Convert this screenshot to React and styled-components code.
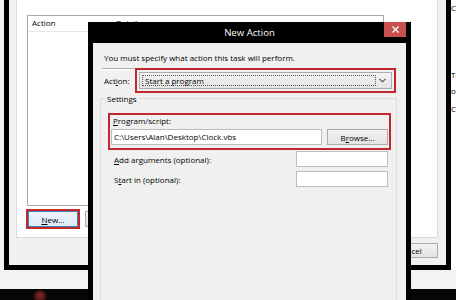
import React from "react";
import styled, { createGlobalStyle } from "styled-components";

const GlobalStyle = createGlobalStyle`
  html, body {
    margin: 0;
    padding: 0;
    background: #f0f0f0;
  }
  * {
    box-sizing: border-box;
  }
`;

const Desktop = styled.div`
  width: 456px;
  height: 300px;
  overflow: hidden;
  display: flex;
  flex-direction: column;
  background: #f3f3f3;
  font-family: "Open Sans", "Liberation Sans", sans-serif;
  font-size: 8px;
  color: #000;
`;

const Workspace = styled.div`
  position: relative;
  flex: 1;
`;

const Taskbar = styled.div`
  height: 11px;
  background: #060606;
  display: flex;
  padding-left: 33px;
`;

const Orb = styled.span`
  width: 14px;
  height: 14px;
  margin-top: 1px;
  border-radius: 50%;
  background: radial-gradient(circle at 50% 40%, #8a2a2a 0%, #4a1414 45%, transparent 75%);
`;

/* window to the right, only a sliver is visible */
const SideWindow = styled.div`
  position: absolute;
  left: 450px;
  top: 0;
  width: 6px;
  height: 270px;
  background: #fff;
  overflow: hidden;
  padding-left: 1px;
  white-space: nowrap;
`;

const SideLine = styled.div`
  line-height: 10px;
  margin-top: ${p => p.$gap}px;
`;

/* Create Task window behind the dialog */
const TaskWindow = styled.div`
  position: absolute;
  left: 4px;
  top: -20px;
  width: 447px;
  height: 290px;
  border: 5px solid #000;
  background: #f0f0f0;
  display: flex;
  flex-direction: column;
  padding: 5px 8px 0 7px;
`;

const TabPage = styled.div`
  flex: 1;
  background: #fff;
  border: 1px solid #d9d9d9;
  padding: 24px 0 0 10px;
`;

const ActionList = styled.div`
  width: 357px;
  height: 191px;
  border: 1px solid #a9a9a9;
  background: #fff;
`;

const ListHeader = styled.div`
  display: flex;
  height: 16px;
  align-items: center;
  padding-bottom: 2px;
  border-bottom: 1px solid #e8e8e8;
`;

const HeaderCell = styled.div`
  width: ${p => p.$w}px;
  padding-left: 4px;
`;

const ListButtons = styled.div`
  display: flex;
  gap: 7px;
  margin: 5px 0 0 1px;
`;

const Button = styled.div`
  width: ${p => p.$w || 50}px;
  height: ${p => p.$h || 16}px;
  display: flex;
  align-items: center;
  justify-content: center;
  border: 1px solid #acacac;
  background: linear-gradient(#f2f2f2, #e3e3e3);
  white-space: nowrap;
`;

const NewButton = styled(Button)`
  border-color: #3c7fb1;
  background: linear-gradient(#eef5fc, #dbeafa);
  outline: 2px solid #c1272d;
`;

const WindowFooter = styled.div`
  display: flex;
  justify-content: flex-end;
  gap: 6px;
  padding: 5px 0 7px;
`;

const Key = styled.span`
  text-decoration: underline;
`;

/* New Action dialog */
const Dialog = styled.div`
  position: absolute;
  left: 88px;
  top: 22px;
  width: 323px;
  height: 290px;
  background: #000;
  display: flex;
  flex-direction: column;
  padding: 0 5px 5px;
`;

const TitleBar = styled.div`
  height: 21px;
  display: grid;
  grid-template-columns: 1fr auto 1fr;
  color: #fff;
`;

const Title = styled.div`
  grid-column: 2;
  line-height: 22px;
  font-size: 9.6px;
`;

const CloseButton = styled.div`
  grid-column: 3;
  justify-self: end;
  width: 22px;
  height: 15px;
  background: #c75050;
  display: flex;
  align-items: center;
  justify-content: center;
`;

const DialogBody = styled.div`
  flex: 1;
  background: #f0f0f0;
  display: flex;
  flex-direction: column;
  padding: 9px 9px 0 7px;
`;

const Intro = styled.div`
  line-height: 11px;
  padding-left: 4px;
`;

const Separator = styled.div`
  margin: 5px 0 0 2px;
  border-top: 1px solid #adadad;
  border-bottom: 1px solid #fff;
`;

const ActionRow = styled.div`
  display: grid;
  grid-template-columns: 35px 253px;
  align-items: center;
  margin-top: 2px;
  padding-left: 4px;
`;

const Combo = styled.div`
  height: 17px;
  display: flex;
  align-items: center;
  padding: 2px;
  border: 1px solid #acacac;
  background: linear-gradient(#f3f3f3, #e4e4e4);
  outline: 2px solid #c1272d;
  outline-offset: 2px;
`;

const ComboValue = styled.div`
  flex: 1;
  height: 11px;
  line-height: 10px;
  padding-left: 2px;
  border: 1px dotted #555;
`;

const ComboArrow = styled.div`
  width: 13px;
  display: flex;
  justify-content: center;
`;

const Settings = styled.fieldset`
  flex: 1;
  margin: 4px 0 0;
  padding: 0;
  min-width: 0;
  border: 1px solid #dcdcdc;
`;

const Legend = styled.legend`
  margin-left: 4px;
  padding: 0 2px;
  line-height: 11px;
`;

const ProgramBox = styled.div`
  width: 283px;
  margin: 9px 0 0 7px;
  border: 2px solid #c1272d;
  padding: 1px 1px 3px 1px;
`;

const FieldLabel = styled.div`
  line-height: 10px;
  padding-left: 2px;
  margin-bottom: 3px;
`;

const FieldRow = styled.div`
  display: flex;
  gap: 5px;
`;

const TextBox = styled.div`
  flex: 1;
  height: 16px;
  line-height: 14px;
  padding-left: 2px;
  background: #fff;
  border: 1px solid #bcbcbc;
  white-space: nowrap;
`;

const OptionRow = styled.div`
  display: grid;
  grid-template-columns: 1fr 92px;
  align-items: center;
  margin-top: ${p => p.$gap}px;
  padding: 0 8px 0 13px;
`;

const App = () => {
  return (
    <>
      <GlobalStyle />
      <Desktop>
        <Workspace>
          <SideWindow>
            <SideLine $gap={3}>Co</SideLine>
            <SideLine $gap={57}>Ta</SideLine>
            <SideLine $gap={6}>or</SideLine>
            <SideLine $gap={8}>Co</SideLine>
          </SideWindow>

          <TaskWindow>
            <TabPage>
              <ActionList>
                <ListHeader>
                  <HeaderCell $w={84}>Action</HeaderCell>
                  <HeaderCell $w={200}>Details</HeaderCell>
                </ListHeader>
              </ActionList>
              <ListButtons>
                <NewButton>
                  <span>
                    <Key>N</Key>ew...
                  </span>
                </NewButton>
                <Button>
                  <span>
                    <Key>E</Key>dit...
                  </span>
                </Button>
                <Button>
                  <span>
                    <Key>D</Key>elete
                  </span>
                </Button>
              </ListButtons>
            </TabPage>
            <WindowFooter>
              <Button $w={57} $h={15}>OK</Button>
              <Button $w={57} $h={15}>Cancel</Button>
            </WindowFooter>
          </TaskWindow>

          <Dialog>
            <TitleBar>
              <Title>New Action</Title>
              <CloseButton>
                <svg width="7" height="7" viewBox="0 0 7 7">
                  <path d="M0.5 0.5 L6.5 6.5 M6.5 0.5 L0.5 6.5" stroke="#fff" strokeWidth="1.3" />
                </svg>
              </CloseButton>
            </TitleBar>
            <DialogBody>
              <Intro>You must specify what action this task will perform.</Intro>
              <Separator />
              <ActionRow>
                <span>
                  Act<Key>i</Key>on:
                </span>
                <Combo>
                  <ComboValue>Start a program</ComboValue>
                  <ComboArrow>
                    <svg width="7" height="5" viewBox="0 0 7 5">
                      <path d="M0.5 0.8 L3.5 3.8 L6.5 0.8" stroke="#444" strokeWidth="1.1" fill="none" />
                    </svg>
                  </ComboArrow>
                </Combo>
              </ActionRow>
              <Settings>
                <Legend>Settings</Legend>
                <ProgramBox>
                  <FieldLabel>
                    <Key>P</Key>rogram/script:
                  </FieldLabel>
                  <FieldRow>
                    <TextBox>C:\Users\Alan\Desktop\Clock.vbs</TextBox>
                    <Button $w={61}>
                      <span>
                        B<Key>r</Key>owse...
                      </span>
                    </Button>
                  </FieldRow>
                </ProgramBox>
                <OptionRow $gap={1}>
                  <span>
                    <Key>A</Key>dd arguments (optional):
                  </span>
                  <TextBox />
                </OptionRow>
                <OptionRow $gap={4}>
                  <span>
                    S<Key>t</Key>art in (optional):
                  </span>
                  <TextBox />
                </OptionRow>
              </Settings>
            </DialogBody>
          </Dialog>
        </Workspace>
        <Taskbar>
          <Orb />
        </Taskbar>
      </Desktop>
    </>
  );
};

export default App;
